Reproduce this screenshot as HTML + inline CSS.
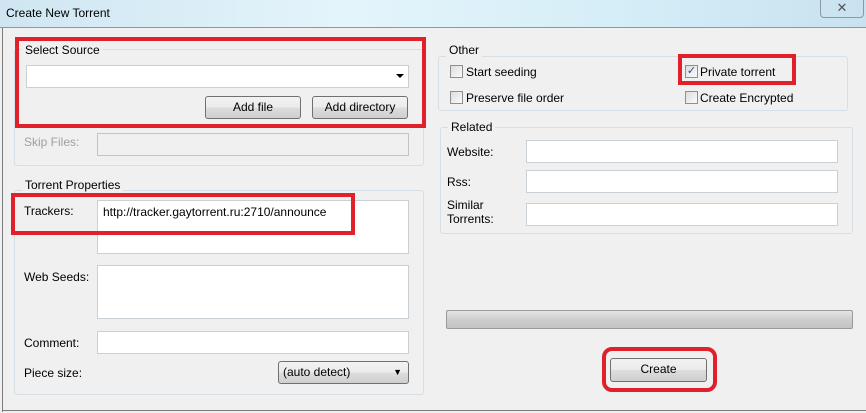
<!DOCTYPE html>
<html><head><style>
*{box-sizing:border-box;margin:0;padding:0}
body{width:866px;height:413px;overflow:hidden;background:#f0f0f0;font-family:"Liberation Sans",sans-serif;font-size:12px;color:#000;position:relative}
.a{position:absolute}
.title{left:0;top:0;width:866px;height:28px;background:linear-gradient(90deg,#cfe6f2,#e4f4fb 40%,#d6eef8 70%,#c9e2ef);border-bottom:1px solid #8a9aa5}
.gb{position:absolute;border:1px solid #d5dfe5;border-radius:3px}
.gl{position:absolute;background:#f0f0f0;padding:0 3px}
.in{position:absolute;background:#fff;border:1px solid #c9d0d6}
.btn{position:absolute;border:1px solid #707070;border-radius:3px;background:linear-gradient(#f2f2f2,#ebebeb 50%,#dddddd 51%,#cfcfcf);text-align:center;line-height:21px}
.red{position:absolute;border:4px solid #e0202a}
.cb{position:absolute;width:13px;height:13px;border:1px solid #8f8f8f;background:linear-gradient(135deg,#ddd,#fafafa)}
.lbl{position:absolute}
</style></head><body>
<div class="a title"></div>
<div class="a" style="left:6px;top:6px;font-size:12px">Create New Torrent</div>
<div class="a" style="left:820px;top:-2px;width:44px;height:20px;border:1px solid #8a9aa5;border-radius:0 0 4px 4px;text-align:center;color:#555;font-size:13px;line-height:18px">✕</div>
<div class="a" style="left:2px;top:28px;width:1px;height:384px;background:#7a7a7a"></div>
<div class="a" style="left:2px;top:410px;width:864px;height:1px;background:#7a7a7a"></div>

<div class="gb" style="left:14px;top:49px;width:410px;height:117px"></div>
<div class="gl" style="left:22px;top:43px">Select Source</div>
<div class="in" style="left:26px;top:65px;width:383px;height:23px"></div>
<div class="a" style="left:396px;top:74px;border-left:4px solid transparent;border-right:4px solid transparent;border-top:4px solid #000"></div>
<div class="btn" style="left:205px;top:96px;width:96px;height:23px">Add file</div>
<div class="btn" style="left:312px;top:96px;width:96px;height:23px">Add directory</div>
<div class="lbl" style="left:24px;top:135px;color:#a0a0a0">Skip Files:</div>
<div class="in" style="left:97px;top:133px;width:312px;height:23px;background:#f0f0f0;border-color:#c0c4c8"></div>
<div class="red" style="left:15px;top:37px;width:411px;height:91px"></div>

<div class="gb" style="left:14px;top:190px;width:410px;height:205px"></div>
<div class="gl" style="left:22px;top:178px">Torrent Properties</div>
<div class="lbl" style="left:24px;top:204px">Trackers:</div>
<div class="in" style="left:97px;top:200px;width:312px;height:54px"></div>
<div class="lbl" style="left:103px;top:205px">http://tracker.gaytorrent.ru:2710/announce</div>
<div class="red" style="left:11px;top:193px;width:344px;height:42px"></div>
<div class="lbl" style="left:24px;top:270px">Web Seeds:</div>
<div class="in" style="left:97px;top:265px;width:312px;height:54px"></div>
<div class="lbl" style="left:24px;top:336px">Comment:</div>
<div class="in" style="left:97px;top:331px;width:312px;height:23px"></div>
<div class="lbl" style="left:24px;top:366px">Piece size:</div>
<div class="btn" style="left:278px;top:361px;width:131px;height:23px;text-align:left;padding-left:4px;line-height:21px">(auto detect)<span style="position:absolute;right:6px;font-size:9px">▼</span></div>

<div class="gb" style="left:438px;top:56px;width:410px;height:55px"></div>
<div class="gl" style="left:446px;top:43px">Other</div>
<div class="cb" style="left:450px;top:65px"></div><div class="lbl" style="left:466px;top:65px">Start seeding</div>
<div class="cb" style="left:450px;top:91px"></div><div class="lbl" style="left:466px;top:91px">Preserve file order</div>
<div class="cb" style="left:685px;top:65px;color:#2a4a9a;font-size:11px;line-height:11px;text-align:center">✓</div><div class="lbl" style="left:700px;top:65px">Private torrent</div>
<div class="cb" style="left:685px;top:91px"></div><div class="lbl" style="left:700px;top:91px">Create Encrypted</div>
<div class="red" style="left:678px;top:54px;width:118px;height:31px"></div>

<div class="gb" style="left:440px;top:127px;width:413px;height:107px"></div>
<div class="gl" style="left:448px;top:120px">Related</div>
<div class="lbl" style="left:447px;top:145px">Website:</div>
<div class="in" style="left:526px;top:140px;width:312px;height:23px"></div>
<div class="lbl" style="left:447px;top:175px">Rss:</div>
<div class="in" style="left:526px;top:170px;width:312px;height:23px"></div>
<div class="lbl" style="left:447px;top:198px;line-height:14px">Similar<br>Torrents:</div>
<div class="in" style="left:526px;top:203px;width:312px;height:23px"></div>

<div class="a" style="left:446px;top:310px;width:407px;height:19px;border:1px solid #9a9a9a;border-radius:2px;background:linear-gradient(#e4e4e4,#cdcdcd 50%,#c4c4c4)"></div>
<div class="btn" style="left:610px;top:358px;width:97px;height:24px">Create</div>
<div class="a" style="left:602px;top:347px;width:115px;height:45px;border:4px solid #e0202a;border-radius:10px"></div>
</body></html>
